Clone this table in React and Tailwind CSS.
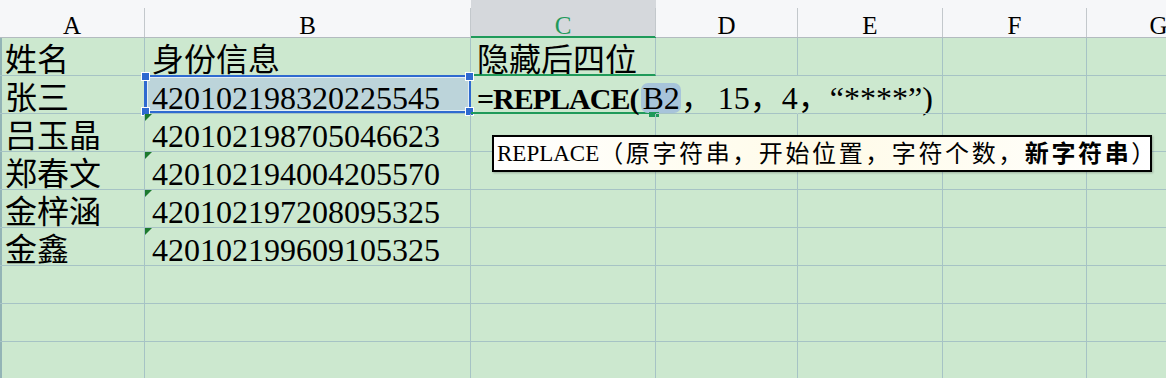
const COLS = ['A', 'B', 'C', 'D', 'E', 'F', 'G'];

const GRID = 'grid grid-cols-[145px_326px_185px_142px_145px_144px_144px]';
const SERIF = "font-['Liberation_Serif','Noto_Sans_CJK_SC',serif]";

const rows = [
  ['姓名', '身份信息', '隐藏后四位'],
  ['张三', '420102198320225545', ''],
  ['吕玉晶', '420102198705046623'],
  ['郑春文', '420102194004205570'],
  ['金梓涵', '420102197208095325'],
  ['金鑫', '420102199609105325'],
  [],
  [],
  [],
];

// little green "number stored as text" flag in the cell corner
const TextFlag = () => (
  <span className="absolute left-0 top-0 h-[7px] w-[7px] bg-[#1c7a2e] [clip-path:polygon(0_0,100%_0,0_100%)]" />
);

const Handle = ({ className }) => (
  <span className={`absolute h-[9px] w-[9px] border border-white bg-[#2f6ad0] ${className}`} />
);

const Formula = () => (
  <span className="relative">
    <span className="font-bold text-[30px] tracking-[-1px]">=REPLACE(</span>
    <span className="ml-[3px] inline-block rounded-[7px] bg-[#a7c4da] px-[1px] leading-[30px]">B2</span>
    <span>，</span>
    <span className="ml-[5px]">15，4，“****”)</span>
  </span>
);

function HeaderCell({ col }) {
  const active = col === 'C';
  return (
    <div
      className={`h-[38px] ${
        active ? 'border-b-2 border-[#1f9a5a] bg-[#d5d8dc]' : 'border-b border-[#b3bbc0]'
      }`}
    >
      <div
        className={`mt-[8px] flex h-[29px] justify-center border-r border-[#c3c8cc] pt-[3px] text-[25px] leading-[29px] ${
          active ? 'text-[#1f9a5a]' : 'text-black'
        }`}
      >
        {col}
      </div>
    </div>
  );
}

function Cell({ r, c, value }) {
  let cls = 'relative h-[38px] whitespace-nowrap border-b border-r border-[#a6c3c5] pt-[6px] text-[32px] leading-[32px]';
  cls += c === 0 ? ' pl-[5px]' : c === 1 ? ' pl-[7px]' : ' pl-[6px]';

  const selected = r === 1 && c === 1;
  const editing = r === 1 && c === 2;

  if (selected) cls += ' bg-[#bcd4da]';
  if (c === 2 && (r === 0 || r === 1)) cls += ' border-b-2 border-b-[#1f9a5a]';
  if (r === 1 && (c === 2 || c === 3)) cls += ' border-r-transparent';

  return (
    <div className={cls}>
      {c === 1 && r >= 2 && r <= 5 && <TextFlag />}
      {editing ? <Formula /> : value}
      {selected && (
        <span className="absolute -left-px -right-px -top-px bottom-0 border-2 border-l-[3px] border-[#2f6ad0] shadow-[inset_0_0_0_1px_#e4eef4]">
          <Handle className="-left-[6px] -top-[5px]" />
          <Handle className="-bottom-[5px] -left-[6px]" />
          <Handle className="-right-[5px] -top-[5px]" />
          <Handle className="-bottom-[5px] -right-[5px]" />
        </span>
      )}
      {editing && <span className="absolute -bottom-[5px] -right-[4px] h-[5px] w-[10px] bg-[#1f9a5a]" />}
    </div>
  );
}

export default function App() {
  return (
    <div className={`relative h-[378px] w-[1166px] overflow-hidden bg-[#cce8cf] text-black ${SERIF}`}>
      <div className={`${GRID} bg-[#f6f7f9]`}>
        {COLS.map((col) => (
          <HeaderCell key={col} col={col} />
        ))}
      </div>

      <div className="shadow-[inset_2px_0_0_#93b4b6]">
        {rows.map((row, r) => (
          <div key={r} className={GRID}>
            {COLS.map((col, c) => (
              <Cell key={col} r={r} c={c} value={row[c]} />
            ))}
          </div>
        ))}
      </div>

      {/* function hint under the cell editor */}
      <div className="absolute left-[492px] top-[135px] flex h-[37px] w-[660px] items-center whitespace-nowrap border-2 border-black bg-linear-to-r from-white via-[#fffbe8] to-white pl-[3px] text-[24px] leading-[30px] shadow-[1px_1px_2px_rgba(0,0,0,0.25)]">
        <span className="text-[23px]">REPLACE</span>
        <span className="tracking-[2.6px]">
          （原字符串，开始位置，字符个数，<b>新字符串</b>）
        </span>
      </div>
    </div>
  );
}
